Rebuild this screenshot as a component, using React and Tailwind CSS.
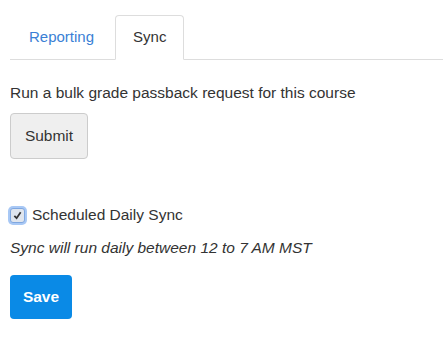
export default function App() {
  return (
    <div className="w-[443px] h-[359px] bg-white text-[15.5px] text-[#333] pl-[10px] pt-[15px]" style={{ fontFamily: '"Liberation Sans", Arial, sans-serif' }}>
      <div className="flex border-b border-[#ddd] h-[45px] text-[15px]">
        <div className="px-[18px] h-[44px] flex items-center text-[#3a7fd5] mr-[2px] border border-transparent">Reporting</div>
        <div className="px-[17px] h-[45px] flex items-center border border-[#ddd] border-b-white rounded-t-[4px] bg-white">Sync</div>
      </div>
      <p className="mt-[23px] leading-[20px]">Run a bulk grade passback request for this course</p>
      <button className="mt-[10px] w-[78px] h-[46px] bg-[#efefef] border border-[#ccc] rounded-[4px] text-[#333]">Submit</button>
      <label className="mt-[46px] flex items-center gap-[7px] leading-[20px]">
        <span className="w-[15px] h-[15px] rounded-[3px] bg-[#dfe5ee] border border-[#7fa7e0] shadow-[0_0_0_2px_#a8c8f5] flex items-center justify-center">
          <svg width="9" height="9" viewBox="0 0 10 10"><path d="M1.5 5.5 L4 8 L8.5 1.5" stroke="#333" strokeWidth="2" fill="none" /></svg>
        </span>
        <span>Scheduled Daily Sync</span>
      </label>
      <p className="mt-[13px] italic leading-[20px]">Sync will run daily between 12 to 7 AM MST</p>
      <button className="mt-[17px] w-[62px] h-[44px] bg-[#0a8ae6] rounded-[4px] text-white font-bold">Save</button>
    </div>
  );
}
